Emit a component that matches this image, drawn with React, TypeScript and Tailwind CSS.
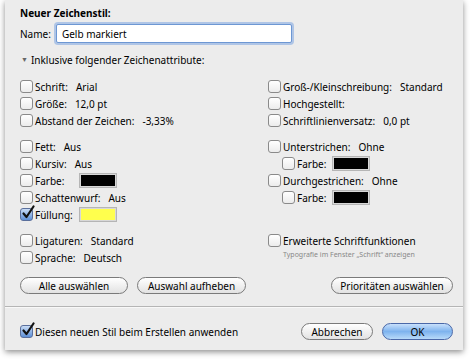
import React from 'react';

const font = { fontFamily: '"Noto Sans", "Lucida Grande", sans-serif' };

function Check({ checked = false }: { checked?: boolean }) {
  if (checked) {
    return (
      <span className="relative inline-flex h-[13px] w-[13px] shrink-0 items-center justify-center rounded-[3px] border border-[#5a6f9c] bg-gradient-to-b from-[#c9dcf5] to-[#5d8fd6]">
        <svg width="14" height="14" viewBox="0 0 14 14" className="absolute -top-[4px] left-[0px]">
          <path d="M2.5 8.5 L5.5 12 L12.5 1.5" fill="none" stroke="#111" strokeWidth="2.2" strokeLinecap="round" strokeLinejoin="round" />
        </svg>
      </span>
    );
  }
  return (
    <span className="inline-block h-[13px] w-[13px] shrink-0 rounded-[3px] border border-[#8a8a8a] bg-gradient-to-b from-white to-[#ececec]" />
  );
}

function Row({
  label,
  value,
  checked,
  swatch,
  labelW,
  indent = false,
}: {
  label: string;
  value?: string;
  checked?: boolean;
  swatch?: string;
  labelW?: string;
  indent?: boolean;
}) {
  return (
    <div className={`flex h-[17px] items-center gap-[2px] ${indent ? 'pl-[14px]' : ''}`}>
      <Check checked={checked} />
      <span className={`whitespace-nowrap ${labelW ?? ''}`}>{label}</span>
      {value && <span className="ml-[6px] whitespace-nowrap">{value}</span>}
      {swatch && (
        <span className="inline-block h-[15px] w-[38px] border border-[#b5b5b5] bg-[#d8d8d8] p-[1px]">
          <span className="block h-full w-full" style={{ background: swatch }} />
        </span>
      )}
    </div>
  );
}

function Pill({ children, w, primary = false }: { children: React.ReactNode; w: string; primary?: boolean }) {
  return (
    <button
      className={`flex h-[17px] items-center justify-center rounded-full border text-[10px] leading-none ${w} ${
        primary
          ? 'border-[#4a68a8] bg-gradient-to-b from-[#c8e0fb] via-[#7eb3ee] to-[#b8daf9] text-black'
          : 'border-[#7a7a7a] bg-gradient-to-b from-white to-[#e2e2e2] text-black'
      }`}
    >
      {children}
    </button>
  );
}

export default function App() {
  return (
    <div className="h-[360px] w-[475px] bg-white" style={font}>
      <div className="ml-[5px] flex h-[350px] w-[458px] flex-col bg-[#ececec] text-[10px] leading-[14px] text-black shadow-[0_2px_6px_rgba(0,0,0,0.45)]">
        {/* Top section */}
        <div className="flex flex-col pl-[15px] pr-[10px] pt-[6px]">
          <div className="font-bold">Neuer Zeichenstil:</div>
          <div className="mt-[4px] flex items-center gap-[5px]">
            <span>Name:</span>
            <div className="flex h-[19px] w-[236px] items-center rounded-[2px] border border-[#6d97d3] bg-white px-[5px] shadow-[0_0_0_2px_rgba(125,165,225,0.55)]">
              Gelb markiert
            </div>
          </div>
          <div className="mt-[10px] flex items-center gap-[3px] pl-[1px]">
            <span className="text-[7px] text-[#666]">▼</span>
            <span>Inklusive folgender Zeichenattribute:</span>
          </div>

          {/* Attribute columns */}
          <div className="mt-[11px] grid grid-cols-[248px_1fr]">
            <div className="flex flex-col">
              <Row label="Schrift:" value="Arial" />
              <Row label="Größe:" value="12,0 pt" />
              <Row label="Abstand der Zeichen:" value="-3,33%" />
              <div className="mt-[9px] flex flex-col">
                <Row label="Fett:" value="Aus" />
                <Row label="Kursiv:" value="Aus" />
                <Row label="Farbe:" swatch="#000000" labelW="w-[42px]" />
                <Row label="Schattenwurf:" value="Aus" />
                <Row label="Füllung:" swatch="#ffff4d" labelW="w-[42px]" checked />
              </div>
              <div className="mt-[9px] flex flex-col">
                <Row label="Ligaturen:" value="Standard" />
                <Row label="Sprache:" value="Deutsch" />
              </div>
            </div>
            <div className="flex flex-col">
              <Row label="Groß-/Kleinschreibung:" value="Standard" />
              <Row label="Hochgestellt:" />
              <Row label="Schriftlinienversatz:" value="0,0 pt" />
              <div className="mt-[9px] flex flex-col">
                <Row label="Unterstrichen:" value="Ohne" />
                <Row label="Farbe:" swatch="#000000" labelW="w-[33px]" indent />
                <Row label="Durchgestrichen:" value="Ohne" />
                <Row label="Farbe:" swatch="#000000" labelW="w-[33px]" indent />
              </div>
              <div className="mt-[26px] flex flex-col">
                <Row label="Erweiterte Schriftfunktionen" />
                <div className="pl-[15px] text-[7px] leading-[11px] text-[#888]">
                  Typografie im Fenster „Schrift“ anzeigen
                </div>
              </div>
            </div>
          </div>

          {/* Selection buttons */}
          <div className="mt-[11px] flex items-center">
            <Pill w="w-[108px]">Alle auswählen</Pill>
            <div className="ml-[9px]">
              <Pill w="w-[109px]">Auswahl aufheben</Pill>
            </div>
            <div className="ml-auto">
              <Pill w="w-[122px]">Prioritäten auswählen</Pill>
            </div>
          </div>
        </div>

        {/* Separator */}
        <div className="mt-[12px] h-px w-full bg-[#b5b5b5]" />
        <div className="h-px w-full bg-[#f8f8f8]" />

        {/* Footer */}
        <div className="mt-[15px] flex items-center pl-[15px] pr-[10px]">
          <div className="flex items-center gap-[2px]">
            <Check checked />
            <span>Diesen neuen Stil beim Erstellen anwenden</span>
          </div>
          <div className="ml-auto flex items-center gap-[9px]">
            <Pill w="w-[72px]">Abbrechen</Pill>
            <Pill w="w-[71px]" primary>
              OK
            </Pill>
          </div>
        </div>
      </div>
    </div>
  );
}
